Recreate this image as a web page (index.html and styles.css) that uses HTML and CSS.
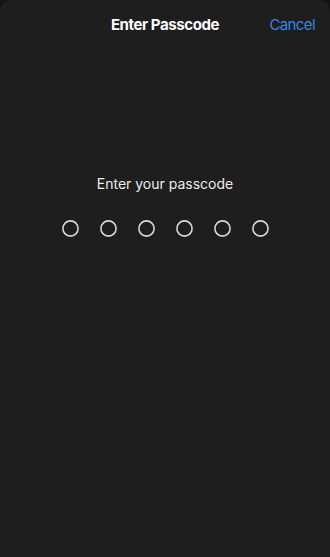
FILE: index.html
```html
<!DOCTYPE html>
<html>
<head>
<meta charset="utf-8">
<link rel="stylesheet" href="styles.css">
</head>
<body>
<div class="sheet">
  <header class="nav">
    <div class="nav-side"></div>
    <h1 class="nav-title">Enter Passcode</h1>
    <div class="nav-side nav-right"><span class="cancel">Cancel</span></div>
  </header>
  <main class="content">
    <p class="prompt">Enter your passcode</p>
    <div class="dots">
      <svg class="dot" viewBox="0 0 17 17"><circle cx="8.5" cy="8.5" r="7.6"/></svg>
      <svg class="dot" viewBox="0 0 17 17"><circle cx="8.5" cy="8.5" r="7.6"/></svg>
      <svg class="dot" viewBox="0 0 17 17"><circle cx="8.5" cy="8.5" r="7.6"/></svg>
      <svg class="dot" viewBox="0 0 17 17"><circle cx="8.5" cy="8.5" r="7.6"/></svg>
      <svg class="dot" viewBox="0 0 17 17"><circle cx="8.5" cy="8.5" r="7.6"/></svg>
      <svg class="dot" viewBox="0 0 17 17"><circle cx="8.5" cy="8.5" r="7.6"/></svg>
    </div>
  </main>
</div>
</body>
</html>
```

FILE: styles.css
```css
html, body {
  margin: 0;
  padding: 0;
  background: #131313;
  height: 100%;
}
body {
  font-family: Inter, "Liberation Sans", sans-serif;
  -webkit-font-smoothing: antialiased;
}
.sheet {
  background: #1e1e1e;
  height: 557px;
  border-radius: 10px 10px 0 0;
  overflow: hidden;
  display: flex;
  flex-direction: column;
}
.nav {
  height: 48px;
  display: grid;
  grid-template-columns: 1fr auto 1fr;
  align-items: center;
  padding: 0 15px;
}
.nav-title {
  margin: 0;
  font-size: 15px;
  font-weight: 650;
  color: #ffffff;
  letter-spacing: -0.4px;
}
.nav-right {
  display: flex;
  justify-content: flex-end;
}
.cancel {
  font-size: 15px;
  color: #3b82e6;
  letter-spacing: -0.6px;
}
.content {
  display: flex;
  flex-direction: column;
  align-items: center;
  padding-top: 127px;
}
.prompt {
  margin: 0;
  font-size: 14px;
  color: #ececec;
  line-height: 18px;
}
.dots {
  display: flex;
  gap: 21px;
  margin-top: 27px;
}
.dot {
  width: 17px;
  height: 17px;
  display: block;
}
.dot circle {
  fill: none;
  stroke: #d6d6d6;
  stroke-width: 1.6;
}
```
